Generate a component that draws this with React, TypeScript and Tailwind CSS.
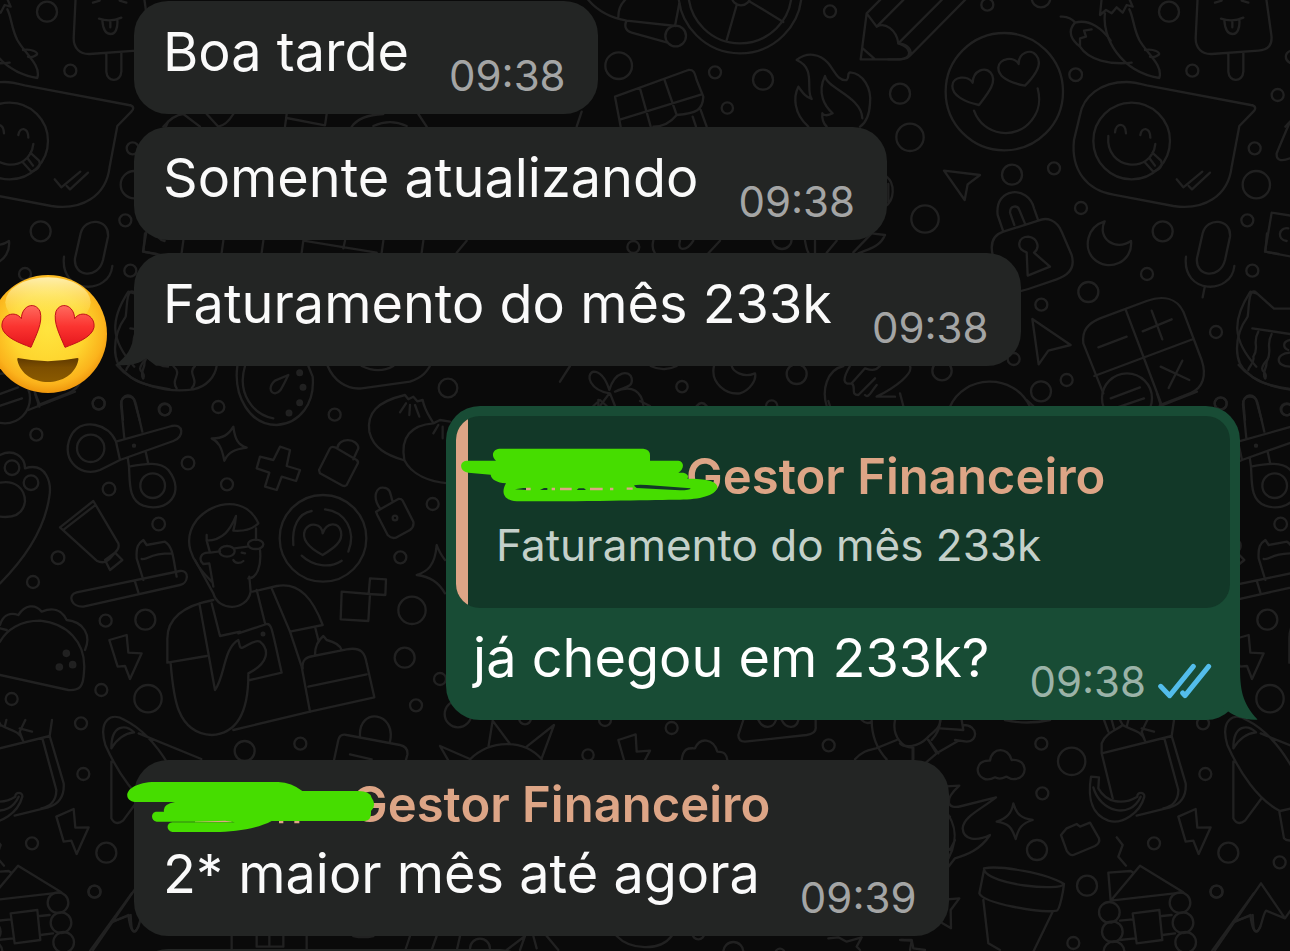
import type { ReactNode } from "react"

// [x, y, r] in wallpaper units, three units for each pixel
const dots = [
  [2962, 14, 18], [3123, -6, 28], [3227, 224, 19], [3507, 35, 30], [3577, 212, 18], [3833, 285, 18],
  [3764, 445, 18], [3769, 554, 41], [3742, 661, 18], [3488, 694, 30], [3243, 624, 18], [3162, 505, 18],
  [3036, 524, 30], [2775, 657, 41], [2730, 412, 41], [2700, 281, 30], [3441, 822, 18], [3757, 812, 18],
  [3265, 876, 30], [3124, 914, 18], [3041, 1077, 18], [2826, 1112, 29], [3123, 1174, 30], [3200, 1140, 18],
  [3648, 996, 18], [3662, 1210, 18], [3860, 1228, 18],
  [1856, 197, 40], [2145, 217, 18], [2289, 239, 30], [2182, 324, 17], [2490, 34, 18], [1900, 741, 18],
  [2346, 718, 29], [2046, 1160, 17], [2390, 1122, 30], [2315, 1218, 17],
  [296, 1211, 18], [109, 1304, 18], [495, 1229, 17], [655, 1221, 18], [1004, 1244, 18], [564, 1389, 19],
  [327, 1467, 19], [681, 1453, 18], [476, 1572, 19], [174, 1673, 19], [1344, 1164, 28], [1298, 1512, 18],
  [1201, 1672, 18], [99, 1746, 18], [317, 1862, 18], [436, 1859, 30], [304, 2070, 18], [444, 2096, 41],
  [35, 2097, 18], [734, 2253, 30], [901, 2231, 18], [1236, 1831, 41], [1214, 1973, 30], [1320, 2037, 18],
  [1248, 2116, 18], [1374, 2142, 40], [284, 2675, 18],
  [3124, 2231, 18], [3215, 2284, 41], [3127, 2380, 18], [3111, 2550, 30], [3261, 2657, 30], [3462, 2530, 18],
  [3649, 2675, 18], [3220, 2829, 18], [3616, 2322, 18], [3685, 2558, 30], [3839, 2587, 18], [3609, 2170, 18],
  [1575, 2155, 18], [1815, 2160, 18], [2015, 2184, 18], [1764, 2265, 17], [2486, 2236, 18],
  [1440, 2846, 30], [2200, 2856, 30], [2095, 2800, 18], [2340, 2860, 14],
]

function Tile() {
  return (
    <g id="tile">
      {dots.map(([x, y, r]) => (
        <circle key={`${x}-${y}`} cx={x} cy={y} r={r} />
      ))}

      {/* top right: heart face, chillies, popsicle, chat bubble */}
      <g transform="translate(2700 0)">
        <circle cx="313" cy="275" r="176" />
        <path d="M237 315C190 305 157 285 157 258C157 228 205 225 218 248C220 210 255 200 272 218C295 245 260 285 237 315Z" />
        <path d="M375 257C330 248 295 232 295 203C297 173 343 168 356 192C355 158 392 145 408 165C432 192 402 230 375 257Z" />
        <path d="M222 332C250 410 350 420 394 362C420 330 422 300 413 265" />
        <path d="M132 512L240 525L203 553L194 600Z" />
        <path d="M482 50C505 48 520 60 525 68C500 95 515 120 540 140C565 180 630 195 695 188M525 68C570 55 610 90 632 122M540 140L540 115L558 110L552 92L575 88" />
        <path d="M615 40C605 110 660 215 778 234C790 195 740 160 718 120C700 85 700 50 688 28M605 -5L600 45L618 30L635 40L650 22L668 38L680 15L698 20L685 -10M735 150C760 145 785 158 775 165C765 172 755 172 750 170" />
        <path d="M893 -10L887 115C887 145 905 163 935 162L1075 152C1105 150 1118 135 1114 105L1098 -10M963 56C985 63 1010 62 1030 53M973 62C975 88 985 102 998 102C1012 102 1020 85 1018 60M997 66V82M985 162V215C987 248 1028 248 1030 215V158M945 8L965 2M1025 2L1045 8" />
        <path d="M680 246C600 246 550 290 540 345L522 420C512 510 560 570 640 584L820 618C910 632 985 590 995 500L1018 378L1060 335C1070 325 1066 316 1052 315L740 256Q700 246 680 246Z" />
        <circle cx="695" cy="423" r="115" />
        <path d="M645 397C648 368 676 366 678 400M721 405C725 380 750 380 751 413M625 408C615 510 755 525 766 432M733 485L760 515C780 510 790 495 783 482L757 458M748 474L765 497" />
        <path d="M830 538L850 562L907 515M866 558L876 568L930 518" />
        <path d="M1170 365C1155 400 1140 435 1130 460C1128 482 1145 485 1170 475M1180 150C1150 155 1150 185 1180 192" />
        <path d="M32 165L195 0M-5 130C15 130 35 145 32 165C20 180 0 178 -35 178" />
      </g>

      {/* lock, moon, mic, calculator, cat */}
      <g transform="translate(2700 540)">
        <path d="M310 155L293 105C283 20 385 15 402 85L415 122M343 135L330 98C330 76 352 74 358 90L375 131M310 155C280 165 270 190 278 225L310 310C325 345 360 335 385 327L470 298C510 285 525 260 515 225L485 155C470 120 440 110 415 122Z" />
        <path d="M380 217C345 205 355 170 385 170C415 175 420 205 402 218L450 260L383 287Z" />
        <path d="M614 124C560 140 550 205 580 235C625 280 700 245 693 183C645 215 590 175 614 124Z" />
        <path d="M908 160C920 110 995 115 990 170L975 240C960 300 885 290 891 235ZM858 230C845 345 995 345 1003 258M914 322L908 352" />
        <path d="M1115 98L1180 108M1115 98L1095 215L1175 230M1165 145C1135 140 1130 180 1160 183" />
        <path d="M397 417L512 495L445 512L416 553Z" />
        <path d="M550 490C545 450 565 430 600 415L740 363C790 345 830 355 850 395L905 540C920 585 910 625 870 640L780 675M550 490L610 640M678 392L785 675M583 588L880 477M595 502L680 470M728 454L815 418M755 392L787 478M782 560L868 600M847 542L806 624" />
        <circle cx="681" cy="655" r="75" />
        <path d="M632 655L720 622M650 683L732 655" />
        <path d="M1170 386L1122 386L1065 335C1045 330 1048 375 1043 410C1000 470 1000 550 1045 580C1080 615 1130 620 1175 628M1057 445L1170 462M1075 455C1055 490 1080 500 1060 530C1065 550 1045 560 1045 570M1115 462C1095 500 1120 510 1100 545C1100 570 1085 575 1095 595M1170 480C1145 485 1150 505 1165 510M1170 518C1125 520 1125 560 1170 560" />
        <path d="M1035 720L1030 665C1035 645 1065 645 1070 665L1085 720M150 680C190 585 340 575 390 680" />
      </g>

      {/* wheel, horn, chocolate, flame, pencil */}
      <g transform="translate(1680 0)">
        <circle cx="540" cy="-25" r="185" />
        <circle cx="540" cy="-25" r="155" />
        <circle cx="543" cy="-12" r="28" />
        <path d="M530 15L500 120M570 5L670 66M85 0C115 35 160 55 200 62L348 78M200 62C190 80 200 95 215 98L320 127M175 50C175 25 185 10 195 0M358 10L345 78" />
        <circle cx="347" cy="108" r="31" />
        <path d="M182 380L165 290L385 210C405 208 405 225 410 240L430 290C428 330 410 340 350 345C330 370 310 380 280 380M240 265L272 380M313 238L350 345M182 358L425 283M398 350L408 380M422 330L440 380M65 335L50 380" />
        <path d="M745 380C700 340 700 290 715 260C730 280 735 290 755 297C735 270 770 205 710 180C740 155 780 160 805 190C825 215 835 245 860 240C870 230 860 220 870 217C910 220 935 265 930 310C928 350 915 370 900 380M795 228C800 265 905 290 907 355M795 228C770 280 795 320 818 340C800 350 790 345 787 340C785 360 795 375 800 380" />
        <path d="M920 40L902 178L1020 178C1055 175 1060 145 1015 130C1010 90 975 65 950 80L920 40ZM908 145L942 175M920 40L970 -10M950 80L1030 0M1015 130L1145 0" />
        <path d="M280 722C275 740 278 750 285 760M360 722C350 755 380 755 400 722M480 722L445 760M735 722C738 740 740 750 745 758M765 722V758M830 722L800 758M975 705C960 740 930 745 895 760M880 757L935 700L975 705" />
        <path d="M980 530C1005 550 1005 600 975 620M985 552V605" />
        <path d="M148 1180C90 1170 75 1125 100 1115C125 1115 140 1145 148 1170C165 1110 210 1110 215 1135C220 1165 190 1160 165 1175C220 1150 245 1180 250 1215M148 1180L120 1218M150 1180L165 1218" />
        <path d="M462 1098C450 1150 500 1185 540 1180C570 1170 590 1140 585 1120C550 1135 520 1115 515 1098M272 1098C300 1112 330 1108 350 1098M30 1098L0 1145M800 1218C785 1170 800 1110 850 1098M870 1098C845 1140 850 1155 875 1150L915 1105C930 1110 945 1115 960 1098M875 1150C890 1160 870 1185 895 1185L945 1135M915 1185C925 1195 930 1180 950 1155M1050 1098C1060 1120 1010 1160 950 1190H1005" />
      </g>

      {/* slivers between the first bubbles */}
      <path d="M490 380Q520 345 550 342L600 380M620 342L655 380Q680 375 700 342M860 342L855 380M860 354L975 376L980 342M1055 380Q1080 345 1150 342M1120 378Q1170 355 1220 378M1280 380L1255 342M435 700L430 755L470 762M550 722L545 758M670 722L665 758M790 722L785 758M910 722L905 758M910 722L1130 758M1035 722L1030 745M1150 722L1145 758M1270 722L1265 758M1400 722L1370 758" />

      {/* scissors, stopwatch, tools and bags on the left */}
      <g transform="translate(0 1080)">
        <path d="M403 20C330 -60 330 -120 385 -205L403 -200M350 15C400 75 500 100 580 88C620 80 645 50 650 18M435 0C400 40 440 30 430 55M520 18C550 45 510 55 530 85M585 18C560 40 600 60 575 85" />
        <circle cx="272" cy="265" r="41" />
        <circle cx="458" cy="377" r="37" />
        <path d="M348 245C325 190 250 175 217 220C175 290 235 355 300 330L360 300ZM360 300L520 243C555 230 550 190 515 198L348 245M373 235L363 135C362 100 400 95 407 130L427 215M437 275L445 312M383 292L387 320M387 320C440 310 480 305 505 330C560 400 500 460 430 437C385 420 390 370 387 320Z" />
        <circle cx="402" cy="257" r="3" />
        <path d="M712 18C700 110 750 195 830 195C900 190 945 130 938 50L925 18M735 18C710 100 760 165 820 175M865 45L825 62C805 80 810 98 825 100C840 98 843 90 865 45Z" />
        <path d="M700 200C705 240 715 255 740 263C705 268 685 275 673 302C665 260 655 245 635 235C670 235 685 225 700 200Z" />
        <path d="M840 260L870 270L860 318L900 330L888 363L845 350L830 390L795 380L808 338L770 325L780 290L820 300Z" />
        <path d="M957 330L990 265Q995 258 1005 262L1070 300Q1077 305 1072 313L1040 375Q1035 380 1028 377L960 340ZM1012 265C1015 230 1075 235 1075 265L1060 298" />
        <path d="M1128 455L1195 417Q1203 415 1208 422L1240 485Q1243 500 1230 510L1190 532Q1175 538 1163 525L1132 465ZM1140 445C1115 410 1130 380 1150 383C1175 385 1170 405 1178 425" />
        <circle cx="1185" cy="474" r="7" />
        <path d="M1215 105C1130 125 1100 160 1108 215C1120 265 1160 285 1210 300M1215 105L1225 118L1240 110L1252 124L1268 120C1275 155 1290 170 1300 190M1300 190C1235 195 1200 230 1213 300C1235 345 1290 365 1345 370M1300 190L1320 180L1350 185M1200 157L1218 130M1228 165L1230 135M1258 170L1245 135M1300 220L1315 195M1328 235V200" />
        <path d="M983 18C1000 60 1040 90 1085 85L1230 65C1270 50 1280 35 1290 18M1085 18C1120 35 1150 35 1180 18" />
        <path d="M180 502L280 423L355 550C360 570 345 575 335 590C320 610 305 610 290 602L180 502ZM192 508L285 436M315 600L345 578L367 600L330 630Z" />
        <path d="M430 660L410 595C408 560 415 550 430 540L440 555L495 545C520 560 520 600 530 650M425 597C450 600 440 580 515 580" />
        <circle cx="969" cy="535" r="130" />
        <path d="M968 585C920 560 905 535 915 510C930 485 965 490 968 520C980 485 1015 485 1023 515C1030 545 1000 565 968 585ZM880 555C875 500 895 460 935 453M975 448C1035 455 1070 510 1045 575M905 587C940 620 990 625 1025 602" />
        <circle cx="36" cy="323" r="22" />
        <circle cx="93" cy="368" r="22" />
        <path d="M0 285C40 265 75 290 75 325C140 305 155 370 148 410C135 500 80 590 0 670M0 368C45 360 75 385 75 425C70 460 45 475 0 470" />
        <path d="M85 150L225 95M105 100L118 140" />
        <path d="M1335 600C1320 580 1315 570 1310 555C1305 620 1280 635 1250 645C1290 650 1315 665 1335 700" />
        <g fill="#212121"><circle cx="899" cy="38" r="7" /><circle cx="909" cy="82" r="7" /><circle cx="899" cy="128" r="7" /><circle cx="867" cy="159" r="7" /></g>
      </g>

      {/* man with a phone */}
      <g transform="translate(0 1080)">
        <path d="M635 665C570 600 545 540 590 480C640 420 740 410 775 490C760 505 740 515 700 512C705 495 707 480 708 468C690 510 670 540 620 542L630 578C600 575 595 600 610 612L628 610L640 680M620 525V542M630 578L660 574M768 505V540M780 570C785 620 770 655 745 655M700 600C705 610 720 612 730 603M703 565L742 560M725 578L735 580" />
        <ellipse cx="681" cy="574" rx="23" ry="16" />
        <ellipse cx="767" cy="553" rx="23" ry="14" />
        <path d="M585 600L640 700C655 755 740 755 752 695L748 650M758 695L830 678C900 665 940 720 968 795L870 815M640 720C560 735 500 770 502 840V908L620 888M512 910C520 1010 530 1120 635 1125C730 1120 745 1020 745 945M598 730L645 990C675 950 670 865 715 840L720 860C725 875 760 835 780 845C810 870 805 910 745 940M635 730L660 828L720 815M715 820L800 792C815 790 815 805 845 938L750 960M770 690L795 790M815 685L870 815L905 920L930 1055L700 1110M945 800L955 840" />
        <circle cx="789" cy="822" r="4" />
        <path d="M945 885C945 855 955 840 970 828L980 840C1000 845 1020 855 1025 870M908 925C905 900 920 890 940 888L1040 868C1085 860 1095 880 1100 910L1123 1012L930 1055M925 980L1100 943" />
        <path d="M1025 695L1110 702L1105 783L1022 778ZM1110 655L1158 658L1156 705L1106 702Z" />
      </g>

      {/* taco, lightning, skateboard */}
      <g transform="translate(0 1680)">
        <path d="M0 345L205 390C240 392 250 380 252 335C260 245 200 190 120 182C60 182 20 210 0 245M0 195C10 160 35 158 55 165C75 135 105 130 125 155C150 145 180 140 200 180C250 185 275 225 255 270M0 205L20 210" />
        <g fill="#212121"><circle cx="199" cy="280" r="8" /><circle cx="178" cy="321" r="8" /><circle cx="218" cy="314" r="8" /></g>
        <path d="M328 240L380 225L385 278L425 280L390 357L375 318L353 320Z" />
        <path d="M230 97L540 33C570 30 565 70 540 75L250 140C215 142 200 105 230 97ZM405 65L415 97" />
        <path d="M1000 610L1015 540Q1020 520 1040 525L1200 555Q1225 560 1222 585L1215 610M1080 528C1075 440 1190 455 1170 545M1050 583L1115 598M1320 558L1410 597M1320 558L1350 610" />
      </g>

      {/* cloud, sparkle, banana bag, rocket, cabin, pot */}
      <g transform="translate(2700 2100)">
        <path d="M250 235C225 225 225 180 270 182C275 140 325 140 335 180C385 175 385 235 345 237C330 240 325 230 318 230C300 240 290 235 285 232C270 240 260 240 250 235Z" />
        <path d="M340 310C350 345 365 355 398 360C365 370 355 385 347 417C335 380 325 370 290 365C320 355 335 340 340 310Z" />
        <path d="M483 405L500 385L530 372L540 380L570 368L597 415C600 425 595 432 585 438L520 465C510 468 505 460 500 452Z" />
        <path d="M835 350L887 327L892 383L932 382L896 462L880 422L857 425Z" />
        <path d="M638 295L605 160V130C615 100 650 90 668 75C690 90 725 90 735 122M605 160L815 108L822 60M735 122L725 95L742 60M725 85L762 95M612 60L625 95M635 60L642 85M660 60L668 75M685 60L680 80M793 115L835 270C835 310 810 320 790 325M815 108L857 250C860 290 840 315 810 322L710 347" />
        <path d="M573 230L597 232L595 265C620 310 670 315 712 290C710 275 735 275 733 290C720 340 665 375 625 362C565 340 565 280 573 230ZM580 262C600 335 690 360 722 290" />
        <path d="M982 135C960 60 1000 35 1040 60C1100 90 1140 140 1175 200M982 135C1020 220 1075 300 1140 333L1175 325M1000 145C1000 70 1045 75 1068 97C1040 100 1015 120 1000 145ZM1000 185V355C1010 375 1025 370 1035 362L1083 297M1082 100L1270 177M1138 335L1152 415C1160 425 1170 422 1180 420" />
        <path d="M650 412L668 435L655 470L678 497M632 602L720 497L850 577L632 602M632 602L625 518L692 513L700 518M660 662L698 658M660 720L705 715M785 648L815 645M787 705L825 700M698 640L778 630L787 720L710 730Z" />
        <circle cx="628" cy="637" r="31" /><circle cx="637" cy="695" r="31" /><circle cx="642" cy="755" r="31" />
        <circle cx="840" cy="608" r="31" /><circle cx="849" cy="668" r="31" /><circle cx="857" cy="727" r="31" />
        <path d="M945 750L1083 550L1155 655L1180 620M1010 662L1058 645C1060 680 1060 695 1070 695C1085 690 1085 650 1098 632L1155 655" />
        <path d="M252 505C300 495 440 520 492 552C480 575 270 555 252 510L238 580C250 610 420 640 470 632C480 630 490 570 492 552M250 600L265 730L300 750M458 635L400 755" />
        <path d="M125 260L178 257C130 300 140 330 185 318L288 292C240 330 190 350 188 385C190 420 230 425 270 405C240 450 200 465 165 475L130 520M130 325C170 370 180 430 130 500M130 350H150M130 430L150 450L165 420" />
        <path d="M120 600L178 595L152 630L153 685L120 665M0 720L35 720L40 745L75 750" />
        <path d="M0 130C15 145 55 140 80 115C100 95 120 85 122 60M85 120L110 160L75 190M38 145V180M120 85L190 90L185 60M110 160L175 122M190 75C235 75 235 125 200 125L165 120M315 60Q380 75 450 60" />
      </g>

      {/* sun, clouds and slivers round the lower bubbles */}
      <g transform="translate(1410 2100)">
        <path d="M0 178C60 120 160 115 215 178M55 142L68 62M68 62L120 132M170 140L252 75L215 175M445 120L497 103L500 155L540 152L525 180M445 120L462 180M635 180C640 140 660 145 675 145C690 110 730 115 742 155C765 155 770 165 772 180M820 60L805 105Q805 125 825 125L1010 105Q1040 100 1037 80V60M865 60C880 90 910 85 918 60M935 60C950 90 980 85 985 60M1175 60Q1190 75 1205 65M1205 60Q1205 130 1250 178M1155 178C1180 150 1200 150 1218 145L1280 120M1275 60C1265 110 1300 145 1330 143M1330 143V178M1375 120L1405 160M1410 60Q1412 90 1385 120" />
        <path d="M110 750L165 708L150 750M190 708L200 745M230 708L265 750M440 708C480 750 570 755 605 708M1075 715L1105 712L1130 725L1175 712L1160 740L1170 750M1295 720L1325 722L1320 750" />
      </g>
      <path d="M695 2808V2853M770 2808V2840H850V2808M808 2808V2840M920 2808V2853M1060 2808Q1090 2815 1120 2808M1230 2808L1215 2853M1310 2808L1295 2850M1380 2808L1370 2853M270 2853L395 2680M340 2765L385 2745Q395 2820 415 2780" />
      <path d="M1780 1218L1800 1200L1820 1218M1795 1200V1218M1920 1203L1950 1218M2090 1218Q2105 1200 2120 1218M2485 1203L2490 1218M2700 1180L2710 1218M3080 1200L3100 1218" />
    </g>
  )
}

function Wallpaper() {
  return (
    <svg
      className="absolute inset-0 h-full w-full"
      viewBox="0 0 3870 2853"
      preserveAspectRatio="xMinYMin slice"
      fill="none"
      stroke="#212121"
      strokeWidth="7"
      strokeLinecap="round"
      strokeLinejoin="round"
      aria-hidden="true"
    >
      <Tile />
      <use href="#tile" x="-3366" />
      <use href="#tile" x="3366" />
    </svg>
  )
}

function HeartEyes() {
  return (
    <svg className="absolute -left-[146px] top-[21px] h-[120px] w-[120px]" viewBox="0 0 360 360" role="img" aria-label="Reação">
      <defs>
        <radialGradient id="skin" cx="0.5" cy="0.45" r="0.56">
          <stop offset="0" stopColor="#ffe53f" />
          <stop offset="0.55" stopColor="#fed52e" />
          <stop offset="0.85" stopColor="#fbb31c" />
          <stop offset="1" stopColor="#ee930b" />
        </radialGradient>
        <linearGradient id="shine" x1="0" y1="0" x2="0" y2="1">
          <stop offset="0" stopColor="#fffbd0" stopOpacity="0.8" />
          <stop offset="1" stopColor="#ffe94a" stopOpacity="0" />
        </linearGradient>
        <linearGradient id="heart" x1="0" y1="0" x2="0" y2="1">
          <stop offset="0" stopColor="#ff6a5e" />
          <stop offset="0.5" stopColor="#fb3430" />
          <stop offset="1" stopColor="#e5151c" />
        </linearGradient>
        <linearGradient id="mouth" x1="0" y1="0" x2="0" y2="1">
          <stop offset="0" stopColor="#603a00" />
          <stop offset="0.4" stopColor="#7d4f00" />
          <stop offset="1" stopColor="#8a5a00" />
        </linearGradient>
      </defs>
      <circle cx="180" cy="180" r="177" fill="url(#skin)" />
      <ellipse cx="180" cy="85" rx="128" ry="75" fill="url(#shine)" />
      <g fill="url(#heart)" stroke="#c01018" strokeWidth="3">
        <path d="M129 220C95 207 48 190 42 160C38 122 82 107 100 134C102 92 142 82 156 112C166 145 143 186 129 220Z" />
        <path d="M231 220C265 207 312 190 318 160C322 122 278 107 260 134C258 92 218 82 204 112C194 145 217 186 231 220Z" />
      </g>
      <path d="M88 258Q86 250 94 253Q180 270 264 253Q274 250 271 258C253 346 107 346 88 258Z" fill="url(#mouth)" />
    </svg>
  )
}

function Ticks() {
  return (
    <svg
      className="mb-[7px] ml-3 h-[36px] w-[54px]"
      viewBox="0 0 162 108"
      fill="none"
      stroke="#53bdeb"
      strokeWidth="15"
      strokeLinecap="round"
      strokeLinejoin="round"
      role="img"
      aria-label="Lida"
    >
      <path d="M8 70L35 98L106 10M74 90L81 98L152 10" />
    </svg>
  )
}

function Received({ text, time, author, children }: { text: string; time: string; author?: ReactNode; children?: ReactNode }) {
  return (
    <li className="relative w-fit rounded-[34px] bg-[#232524] pb-[14px] pl-[29px] pr-8 pt-[19px]">
      {children}
      {author}
      <div className="flex items-end justify-between">
        <p className="mb-4 whitespace-nowrap text-[54px] leading-[64px]">{text}</p>
        <time className="ml-10 text-[42px] leading-[48px] text-[#a4a5a5]">{time}</time>
      </div>
    </li>
  )
}

export default function App() {
  return (
    <main className="relative min-h-screen overflow-hidden bg-[#0a0a0a] font-['Inter','Liberation_Sans',sans-serif] text-[#fafafa]">
      <Wallpaper />
      <ul className="relative flex h-screen flex-col gap-[13px] pl-[134px] pt-px">
        <Received text="Boa tarde" time="09:38" />
        <Received text="Somente atualizando" time="09:38" />
        <Received text="Faturamento do mês 233k" time="09:38">
          <svg className="absolute -left-[18px] bottom-0 h-[40px] w-[52px]" viewBox="0 0 156 120" fill="#232524" aria-hidden="true">
            <path d="M54 0V25C50 65 30 95 2 113C0 118 4 119 8 118C45 118 75 112 90 96L120 119H156V0Z" />
          </svg>
          <HeartEyes />
        </Received>

        <li className="relative mb-[27px] mr-[50px] mt-[27px] w-fit self-end rounded-[34px] bg-[#184c35] pb-[14px] text-white">
          <svg className="absolute -right-[18px] bottom-0 h-[54px] w-[36px]" viewBox="0 0 108 162" fill="#184c35" aria-hidden="true">
            <path d="M0 0H54C54 70 60 110 106 160C108 162 100 161 96 161C65 161 40 152 18 136L0 120Z" />
          </svg>
          <blockquote className="m-[10px] mb-[18px] flex overflow-hidden rounded-3xl bg-[#123828]">
            <div className="w-3 bg-[#dda586]" />
            <div className="pb-[35px] pl-7 pt-[31px]">
              <cite className="block pl-[190px] text-[49px] font-semibold not-italic leading-[60px] text-[#dda586]">Gestor Financeiro</cite>
              <p className="mt-[10px] text-[44px] leading-[56px] text-[#c4d0ca]">Faturamento do mês 233k</p>
            </div>
          </blockquote>
          <svg className="absolute left-[14px] top-[42px] h-[56px] w-[260px]" viewBox="0 0 780 168" aria-hidden="true">
            <path d="M118 2H550Q570 4 570 22V38H655C675 40 672 66 655 74H670Q690 80 682 92C740 92 775 100 772 120C765 142 720 155 660 155C580 155 430 160 170 160C125 157 125 127 138 106Q95 102 92 80L25 74C-3 70 -3 40 20 38H108C92 24 98 4 118 2Z" fill="#46dd00" />
            <path d="M522 113Q526 109 560 111L692 121Q690 127 660 127L530 120Z" fill="#123828" />
            <path d="M165 124L190 120H198V126ZM240 126L252 120H262V126ZM350 126L356 121H372L378 126Z" fill="#123828" />
            <path d="M198 123H212M275 123H285M300 123H335M390 123H428M450 123H460M500 122H518" stroke="#dda586" strokeWidth="7" />
          </svg>
          <div className="flex items-end justify-between pl-[27px] pr-[28px]">
            <p className="mb-4 whitespace-nowrap text-[54px] leading-[64px]">já chegou em 233k?</p>
            <div className="flex items-end">
              <time className="ml-10 text-[42px] leading-[48px] text-[#9bb3a8]">09:38</time>
              <Ticks />
            </div>
          </div>
        </li>

        <Received
          text="2* maior mês até agora"
          time="09:39"
          author={
            <div className="relative -mt-1 mb-[7px]">
              <p className="pl-[188px] text-[49px] font-semibold leading-[60px] text-[#dda586]">Gestor Financeiro</p>
              <svg className="absolute -left-[38px] top-[6px] h-[54px] w-[252px]" viewBox="0 0 756 162" aria-hidden="true">
                <path d="M210 119H320M462 122H475M508 122H523" stroke="#dda586" strokeWidth="10" />
                <path d="M80 3H460Q500 5 532 30H700Q735 30 740 50Q756 72 738 90Q740 118 720 120H440C400 142 330 153 270 153H142C122 150 124 125 142 124H330L300 119L210 122H95C75 118 78 92 95 92H117Q112 70 150 63H30C-6 60-8 10 80 3Z" fill="#46dd00" />
              </svg>
            </div>
          }
        />
        <li className="h-28 w-[400px] shrink-0 rounded-[34px] bg-[#232524]" aria-hidden="true" />
      </ul>
    </main>
  )
}
